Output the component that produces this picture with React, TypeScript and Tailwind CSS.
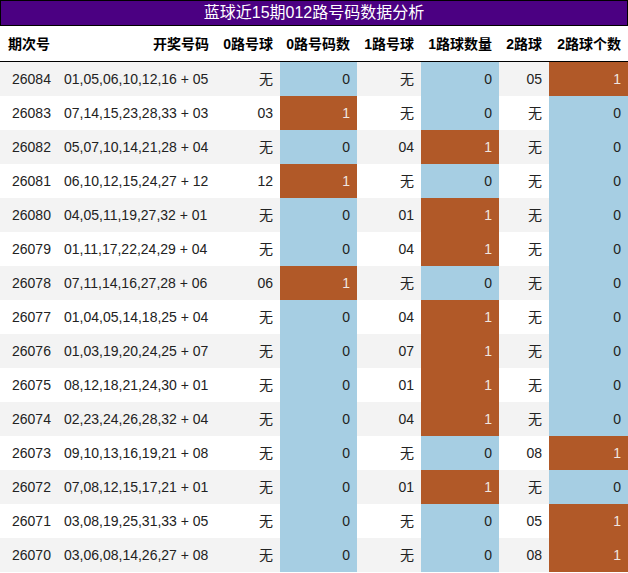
const rows: [string, string, string, string, string][] = [
  ["26084", "01,05,06,10,12,16 + 05", "无", "无", "05"],
  ["26083", "07,14,15,23,28,33 + 03", "03", "无", "无"],
  ["26082", "05,07,10,14,21,28 + 04", "无", "04", "无"],
  ["26081", "06,10,12,15,24,27 + 12", "12", "无", "无"],
  ["26080", "04,05,11,19,27,32 + 01", "无", "01", "无"],
  ["26079", "01,11,17,22,24,29 + 04", "无", "04", "无"],
  ["26078", "07,11,14,16,27,28 + 06", "06", "无", "无"],
  ["26077", "01,04,05,14,18,25 + 04", "无", "04", "无"],
  ["26076", "01,03,19,20,24,25 + 07", "无", "07", "无"],
  ["26075", "08,12,18,21,24,30 + 01", "无", "01", "无"],
  ["26074", "02,23,24,26,28,32 + 04", "无", "04", "无"],
  ["26073", "09,10,13,16,19,21 + 08", "无", "无", "08"],
  ["26072", "07,08,12,15,17,21 + 01", "无", "01", "无"],
  ["26071", "03,08,19,25,31,33 + 05", "无", "无", "05"],
  ["26070", "03,06,08,14,26,27 + 08", "无", "无", "08"],
];

const grid = "grid grid-cols-[58px_158px_64px_77px_64px_78px_50px_79px]";

function CountCell({ ball }: { ball: string }) {
  const hit = ball !== "无";
  return (
    <div
      className={
        hit
          ? "flex items-center justify-end pr-[7px] bg-[#b15928] text-[#f0e6e0]"
          : "flex items-center justify-end pr-[7px] bg-[#a6cee3] text-[#222]"
      }
    >
      {hit ? "1" : "0"}
    </div>
  );
}

export default function App() {
  return (
    <div
      className="w-[628px] bg-white text-[14px]"
      style={{ fontFamily: '"Liberation Sans", "Noto Sans CJK SC", sans-serif' }}
    >
      <div className="h-[26px] border border-black bg-[#4b0082] text-white text-[16px] flex items-center justify-center">
        蓝球近15期012路号码数据分析
      </div>
      <div className={`${grid} h-[36px] pt-[2px] border-b border-black font-bold text-black`}>
        <div className="flex items-center pl-[8px]">期次号</div>
        <div className="flex items-center justify-end pr-[7px]">开奖号码</div>
        <div className="flex items-center justify-end pr-[7px]">0路号球</div>
        <div className="flex items-center justify-end pr-[7px]">0路号码数</div>
        <div className="flex items-center justify-end pr-[7px]">1路号球</div>
        <div className="flex items-center justify-end pr-[7px]">1路球数量</div>
        <div className="flex items-center justify-end pr-[7px]">2路球</div>
        <div className="flex items-center justify-end pr-[7px]">2路球个数</div>
      </div>
      {rows.map((r, i) => (
        <div
          key={r[0]}
          className={`${grid} h-[34px] text-[#222] ${i % 2 === 0 ? "bg-[#f3f3f3]" : "bg-white"}`}
        >
          <div className="flex items-center pl-[12px]">{r[0]}</div>
          <div className="flex items-center pl-[6px]">{r[1]}</div>
          <div className="flex items-center justify-end pr-[7px]">{r[2]}</div>
          <CountCell ball={r[2]} />
          <div className="flex items-center justify-end pr-[7px]">{r[3]}</div>
          <CountCell ball={r[3]} />
          <div className="flex items-center justify-end pr-[7px]">{r[4]}</div>
          <CountCell ball={r[4]} />
        </div>
      ))}
    </div>
  );
}
